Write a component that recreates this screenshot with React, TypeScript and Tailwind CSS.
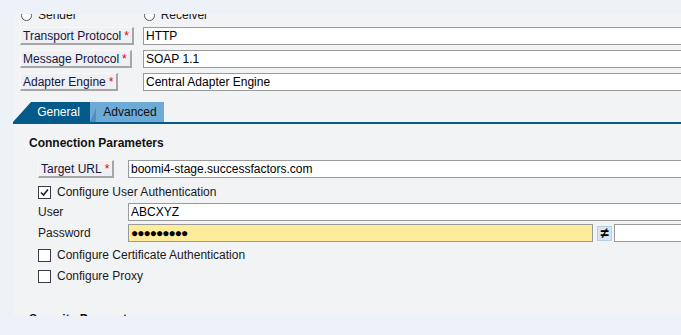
import React from "react";

const font = { fontFamily: '"Liberation Sans", Arial, sans-serif' };

function LabelButton({ text }: { text: string }) {
  return (
    <div className="h-[18px] flex items-center bg-[#eef0f3] border-t border-l border-t-[#f8f8f8] border-l-[#f8f8f8] border-r-2 border-b-2 border-r-[#a6a6a6] border-b-[#a6a6a6] pl-[2px] pr-[3px] text-[12px] leading-[14px] text-[#14143f] whitespace-nowrap">
      {text}
      <span className="text-[#e0001a] ml-[3px]">*</span>
    </div>
  );
}

function TextInput({ value, className = "" }: { value: string; className?: string }) {
  return (
    <div
      className={`shrink-0 h-[18px] flex items-center border border-[#9a9a9a] bg-white pl-[2px] text-[12px] leading-[14px] text-black whitespace-nowrap ${className}`}
    >
      {value}
    </div>
  );
}

function Checkbox({ checked, label }: { checked?: boolean; label: string }) {
  return (
    <div className="h-[20px] flex items-center">
      <div className="shrink-0 w-[13px] h-[13px] border border-[#3a3a48] bg-white flex items-center justify-center">
        {checked && (
          <svg width="9" height="9" viewBox="0 0 9 9">
            <path d="M1 4.5 L3.5 7 L8 1.5" fill="none" stroke="#222" strokeWidth="1.6" />
          </svg>
        )}
      </div>
      <span className="ml-[6px] text-[12px] leading-[14px] text-[#1a1a1a] whitespace-nowrap">{label}</span>
    </div>
  );
}

export default function App() {
  return (
    <div className="w-[681px] h-[335px] bg-[#edf1f8] overflow-hidden" style={font}>
      <div className="ml-[13px] mt-[14px] h-[302px] bg-[#f2f3f5] overflow-hidden">
        {/* radio row (partly scrolled out) */}
        <div className="-mt-[8px] h-[18px] flex items-center text-[12px] leading-[14px] text-[#1a1a1a]">
          <div className="shrink-0 ml-[8px] w-[11px] h-[11px] rounded-full border border-[#555] bg-white" />
          <span className="ml-[6px]">Sender</span>
          <div className="shrink-0 ml-[67px] w-[11px] h-[11px] rounded-full border border-[#555] bg-white" />
          <span className="ml-[6px]">Receiver</span>
        </div>

        <div className="mt-[3px] flex flex-col gap-[5px] pl-[7px]">
          <div className="flex items-center">
            <div className="shrink-0 w-[123px] flex">
              <LabelButton text="Transport Protocol" />
            </div>
            <TextInput value="HTTP" className="w-[600px]" />
          </div>
          <div className="flex items-center">
            <div className="shrink-0 w-[123px] flex">
              <LabelButton text="Message Protocol" />
            </div>
            <TextInput value="SOAP 1.1" className="w-[600px]" />
          </div>
          <div className="flex items-center">
            <div className="shrink-0 w-[123px] flex">
              <LabelButton text="Adapter Engine" />
            </div>
            <TextInput value="Central Adapter Engine" className="w-[600px]" />
          </div>
        </div>

        {/* tabs */}
        <div className="mt-[11px] flex h-[20px] items-end">
          <div className="shrink-0 relative w-[77px] h-[20px] bg-[#045a88] flex items-center justify-center pl-[14px] text-white text-[12px] leading-[14px] [clip-path:polygon(18px_0,100%_0,100%_100%,0_100%)]">
            General
          </div>
          <div className="shrink-0 relative w-[74px] h-[20px] bg-[#6eaad6] flex items-center justify-center pl-[6px] text-[#111] text-[12px] leading-[14px]">
            <div className="absolute left-0 bottom-0 w-[6px] h-[14px] bg-[#4f8fbe] [clip-path:polygon(100%_0,100%_100%,0_100%)]" />
            Advanced
          </div>
        </div>
        <div className="h-[2px] bg-[#045a88]" />

        {/* connection params */}
        <div className="pl-[16px]">
          <div className="mt-[12px] text-[12px] leading-[14px] font-bold text-[#111]">Connection Parameters</div>
          <div className="ml-[9px]">
            <div className="mt-[10px] flex items-center">
              <div className="shrink-0 w-[90px] flex">
                <LabelButton text="Target URL" />
              </div>
              <TextInput value="boomi4-stage.successfactors.com" className="w-[600px]" />
            </div>
            <div className="mt-[4px]">
              <Checkbox checked label="Configure User Authentication" />
            </div>
            <div className="mt-[1px] flex items-center">
              <div className="shrink-0 w-[90px] text-[12px] leading-[14px] text-[#1a1a1a]">User</div>
              <TextInput value="ABCXYZ" className="w-[600px]" />
            </div>
            <div className="mt-[3px] flex items-center">
              <div className="shrink-0 w-[90px] text-[12px] leading-[14px] text-[#1a1a1a]">Password</div>
              <div className="shrink-0 w-[465px] h-[18px] flex items-center border border-[#9a9a9a] bg-[#ffec9a] pl-[2px] text-[12px] leading-[14px] text-black tracking-[-1px]">
                ●●●●●●●●●
              </div>
              <div className="shrink-0 ml-[4px] w-[15px] h-[15px] bg-[#d6e6f4] border border-[#b7cde0] flex items-center justify-center text-[15px] font-bold leading-[14px] text-black">
                ≠
              </div>
              <div className="shrink-0 ml-[2px] w-[100px] h-[18px] border border-[#9a9a9a] bg-white" />
            </div>
            <div className="mt-[3px]">
              <Checkbox label="Configure Certificate Authentication" />
            </div>
            <div className="mt-[1px]">
              <Checkbox label="Configure Proxy" />
            </div>
          </div>
          <div className="mt-[26px] text-[12px] leading-[14px] font-bold text-[#111]">Security Parameters</div>
        </div>
      </div>
    </div>
  );
}
